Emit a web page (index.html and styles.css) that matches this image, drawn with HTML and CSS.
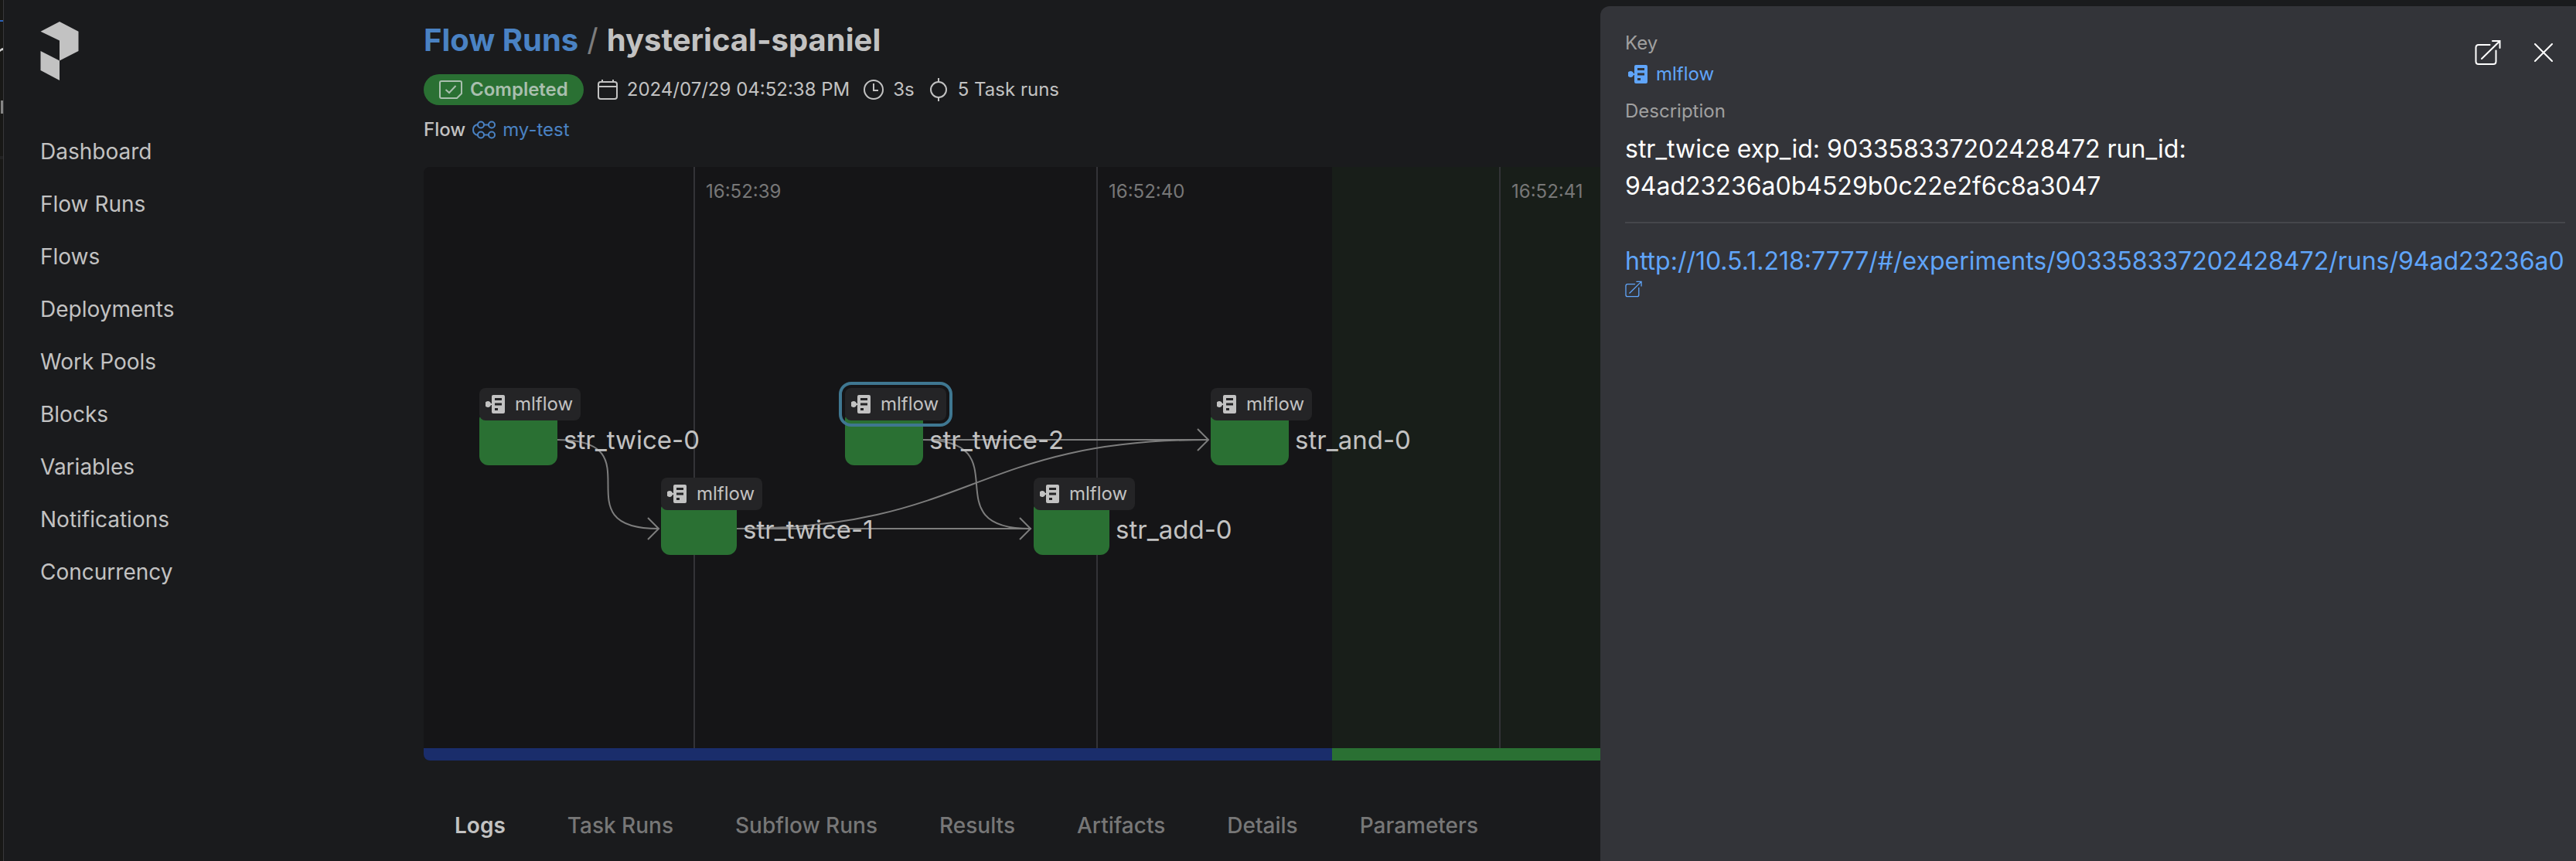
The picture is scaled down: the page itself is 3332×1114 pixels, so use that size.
FILE: index.html
```html
<!DOCTYPE html>
<html lang="en">
<head>
<meta charset="utf-8">
<title>hysterical-spaniel – Flow Run</title>
<link rel="stylesheet" href="styles.css">
</head>
<body>
<svg class="sprite" aria-hidden="true">
  <symbol id="artifact" viewBox="0 0 26 24">
    <path fill="currentColor" fill-rule="evenodd" d="M10 0H23Q25 0 25 2V22Q25 24 23 24H10Q8 24 8 22V13H7A4 4 0 1 1 7 11H8V2Q8 0 10 0ZM12 4V7H21V4ZM12 10.500V13.500H21V10.500ZM12 17V20H16V17Z"/>
  </symbol>
  <symbol id="external" viewBox="0 0 34 34">
    <path fill="none" stroke="currentColor" stroke-width="2" stroke-linecap="round" d="M19.500 7H5Q1.500 7 1.500 10.500V28.500Q1.500 32 5 32H24Q27.500 32 27.500 28.500V14.500M23 2H32.500V11M32 2.500 9 25"/>
  </symbol>
</svg>
<div class="app">
  <div class="edge">
    <svg width="4" height="210" viewBox="0 0 4 210" aria-hidden="true"><path fill="#2c62b8" d="M0 26h4v2H0z"/><path fill="#d0d0d0" d="M0 64q2-2 4-2v3q-2 0-4 2z"/><path fill="#858585" d="M1 130h3v17H1z"/><path fill="#222" d="M0 202h4v4H0z"/></svg>
  </div>
  <nav class="sidebar">
    <a class="logo" href="#" aria-label="Home"><svg width="50" height="76" viewBox="0 0 50 76"><path fill="#c2c2c2" d="M.5 12.700 25 0l24.500 12.700V38L25 50.500v-26zM.5 38 25 50.500V76L.5 63z"/></svg></a>
    <a href="#">Dashboard</a>
    <a href="#">Flow Runs</a>
    <a href="#">Flows</a>
    <a href="#">Deployments</a>
    <a href="#">Work Pools</a>
    <a href="#">Blocks</a>
    <a href="#">Variables</a>
    <a href="#">Notifications</a>
    <a href="#">Concurrency</a>
  </nav>
  <main class="main">
    <h1 class="title"><a href="#">Flow Runs</a><span class="slash">/</span><span>hysterical-spaniel</span></h1>
    <div class="meta">
      <span class="tag"><svg width="30" height="24" viewBox="0 0 30 24" fill="none" stroke="currentColor" stroke-width="2"><path d="M3 1H27Q29 1 29 3V17L23 23H3Q1 23 1 21V3Q1 1 3 1Z"/><path d="m8.500 12 4.500 4L21.500 7"/></svg>Completed</span>
      <span class="item"><svg width="26" height="28" viewBox="0 0 26 28" fill="none" stroke="currentColor" stroke-width="2"><rect x="1" y="4" width="24" height="22" rx="3"/><path d="M1 10h24M6 1v3M20 1v3"/></svg>2024/07/29 04:52:38 PM</span>
      <span class="item"><svg width="26" height="28" viewBox="0 0 26 28" fill="none" stroke="currentColor" stroke-width="2"><circle cx="13" cy="14" r="12"/><path d="M13 6v9h6"/></svg>3s</span>
      <span class="item"><svg width="26" height="32" viewBox="0 0 26 32" fill="none" stroke="currentColor" stroke-width="2"><circle cx="13" cy="16" r="10"/><path d="M13 1v5M13 26v5"/></svg>5 Task runs</span>
    </div>
    <div class="flow">Flow <a href="#"><svg width="30" height="24" viewBox="0 0 30 24" fill="none" stroke="currentColor" stroke-width="2"><circle cx="11" cy="5.500" r="4"/><circle cx="25" cy="5.500" r="4"/><circle cx="11" cy="18.500" r="4"/><circle cx="25" cy="18.500" r="4"/><path d="M15 5.500h6M15 18.500h6M7 5Q1 6 1 12t6 7"/></svg>my-test</a></div>
    <section class="graph" aria-label="Flow run graph">
      <div class="canvas">
        <div class="after"></div>
        <span class="tick tick-39">16:52:39</span>
        <span class="tick tick-40">16:52:40</span>
        <span class="tick tick-41">16:52:41</span>
        <svg class="edges" width="1200" height="752" viewBox="0 0 1200 752" fill="none" stroke="#7d7d7d" stroke-width="2" aria-hidden="true">
          <path d="M173 353C304 353 173 468 304 468M290 454l14 14-14 14"/>
          <path d="M405 468H786M771 454l14 14-14 14"/>
          <path d="M405 468C710 468 710 353 1015 353"/>
          <path d="M645 353H1015M1001 339l14 14-14 14"/>
          <path d="M645 353C776 353 654 468 785 468"/>
        </svg>
        <div class="node n0"><button class="badge"><svg width="26" height="24"><use href="#artifact"/></svg>mlflow</button><div class="bar"></div><span class="name">str_twice-0</span></div>
        <div class="node n1 narrow"><button class="badge"><svg width="26" height="24"><use href="#artifact"/></svg>mlflow</button><div class="bar"></div><span class="name">str_twice-1</span></div>
        <div class="node n2"><button class="badge selected"><svg width="26" height="24"><use href="#artifact"/></svg>mlflow</button><div class="bar"></div><span class="name">str_twice-2</span></div>
        <div class="node n3 narrow"><button class="badge"><svg width="26" height="24"><use href="#artifact"/></svg>mlflow</button><div class="bar"></div><span class="name">str_add-0</span></div>
        <div class="node n4"><button class="badge"><svg width="26" height="24"><use href="#artifact"/></svg>mlflow</button><div class="bar"></div><span class="name">str_and-0</span></div>
      </div>
      <div class="states"><div class="running"></div><div class="completed"></div></div>
    </section>
    <div class="tabs" role="tablist">
      <button role="tab" aria-selected="true">Logs</button>
      <button role="tab">Task Runs</button>
      <button role="tab">Subflow Runs</button>
      <button role="tab">Results</button>
      <button role="tab">Artifacts</button>
      <button role="tab">Details</button>
      <button role="tab">Parameters</button>
    </div>
  </main>
</div>
<aside class="panel">
  <div class="head">
    <dl>
      <dt>Key</dt>
      <dd><a class="key" href="#"><svg width="26" height="24"><use href="#artifact"/></svg>mlflow</a></dd>
      <dt>Description</dt>
    </dl>
    <div class="actions">
      <button aria-label="Open artifact"><svg width="34" height="34"><use href="#external"/></svg></button>
      <button aria-label="Close"><svg width="24" height="24" viewBox="0 0 24 24" stroke="currentColor" stroke-width="2" stroke-linecap="round"><path d="m1 1 22 22M23 1 1 23"/></svg></button>
    </div>
  </div>
  <p class="desc">str_twice exp_id: 903358337202428472 run_id: <br>94ad23236a0b4529b0c22e2f6c8a3047</p>
  <hr>
  <a class="url" href="#"><span>http://10.5.1.218:7777/#/experiments/903358337202428472/runs/94ad23236a0b4529b0c22e2f6c8a3047</span><svg width="22" height="22"><use href="#external"/></svg></a>
</aside>
</body>
</html>
```
FILE: styles.css
```css
* { box-sizing: border-box; }
body {
  margin: 0;
  background: #1a1b1d;
  color: #c2c2c2;
  font-family: Inter, "Liberation Sans", sans-serif;
  font-size: 24px;
  line-height: 32px;
}
a { color: inherit; text-decoration: none; }
button { border: 0; padding: 0; background: none; color: inherit; font: inherit; cursor: pointer; }
svg { display: block; flex: none; }
.sprite { position: absolute; width: 0; height: 0; }

.app { display: flex; min-height: 100vh; overflow: hidden; }
.edge { width: 5px; background: #181816; border-right: 1px solid #38383a; }
.sidebar {
  display: flex;
  flex-direction: column;
  flex: none;
  width: 511px;
  padding: 28px 47px;
  font-size: 28px;
  line-height: 68px;
}
.logo { margin-bottom: 58px; }

.main { flex: 1; min-width: 0; padding: 25px 32px 0; }
.title {
  display: flex;
  gap: 11px;
  margin: 0 0 17px;
  font-size: 40px;
  line-height: 54px;
  font-weight: 700;
}
.title a, .flow a { color: #4a82c3; }
.slash { color: #7d7d7d; font-weight: 400; }
.meta { display: flex; align-items: center; gap: 18px; height: 40px; }
.tag {
  display: flex;
  align-items: center;
  gap: 10px;
  height: 40px;
  padding: 0 20px;
  border-radius: 20px;
  background: #2a7033;
  color: #a9bfae;
  font-weight: 600;
}
.item { display: flex; align-items: center; gap: 12px; }
.flow { display: flex; gap: 9px; margin: 16px 0 32px; font-weight: 500; }
.flow a { display: flex; align-items: center; gap: 9px; font-weight: 400; }

.graph { border-radius: 8px; overflow: hidden; background: #151517; }
.canvas { position: relative; height: 752px; }
.after { position: absolute; inset: 0 0 0 1175px; background: #181e19; }
.tick {
  position: absolute;
  top: 0;
  bottom: 0;
  padding: 16px 0 0 14px;
  border-left: 2px solid #333337;
  color: #777;
}
.tick-39 { left: 349px; }
.tick-40 { left: 870px; }
.tick-41 { left: 1391px; }
.edges { position: absolute; left: 0; top: 0; }
.node {
  position: absolute;
  top: 286px;
  display: grid;
  grid-template-columns: 101px auto;
  grid-template-rows: 36px 64px;
  column-gap: 8px;
}
.narrow { top: 402px; grid-template-columns: 98px auto; }
.n0 { left: 72px; }
.n1 { left: 307px; }
.n2 { left: 545px; }
.n3 { left: 789px; }
.n4 { left: 1018px; }
.badge {
  z-index: 1;
  grid-column: 1 / 3;
  display: flex;
  align-items: center;
  justify-self: start;
  gap: 12px;
  width: 131px;
  height: 42px;
  padding: 0 8px;
  border-radius: 8px;
  background: #242426;
}
.selected { outline: 4px solid #3f7791; outline-offset: 4px; }
.bar { border-radius: 4px 4px 12px 12px; background: #2a7033; }
.name { font-size: 33px; line-height: 62px; white-space: nowrap; }
.states { display: flex; height: 16px; }
.running { width: 1175px; background: #1a2d6b; }
.completed { flex: 1; background: #2a7033; }

.tabs { display: flex; gap: 80px; padding: 64px 40px 0; }
.tabs button { font-size: 28px; line-height: 40px; font-weight: 500; color: #777; }
.tabs [aria-selected] { color: #c2c2c2; font-weight: 600; }

.panel {
  position: fixed;
  top: 8px;
  right: 0;
  bottom: 0;
  width: 1262px;
  padding: 31px 14px 0 32px;
  border-radius: 12px 0 0 0;
  background: #333439;
  color: #fff;
}
.head { display: flex; justify-content: space-between; }
dl { margin: 0; color: #a0a0a0; }
dl, dt, dd { line-height: 34px; }
dd { margin: 6px 0 14px; }
.key { display: flex; align-items: center; gap: 10px; padding-left: 4px; color: #60a5fa; }
.actions { display: flex; align-items: center; gap: 43px; height: 58px; padding-right: 16px; }
.desc { margin: 8px 0 22px; font-size: 32px; line-height: 48px; }
hr { margin: 0; border: 0; border-top: 2px solid #45464b; }
.url { display: block; margin-top: 24px; color: #60a5fa; font-size: 32px; line-height: 50px; }
.url span { display: block; overflow: hidden; white-space: nowrap; }
```
